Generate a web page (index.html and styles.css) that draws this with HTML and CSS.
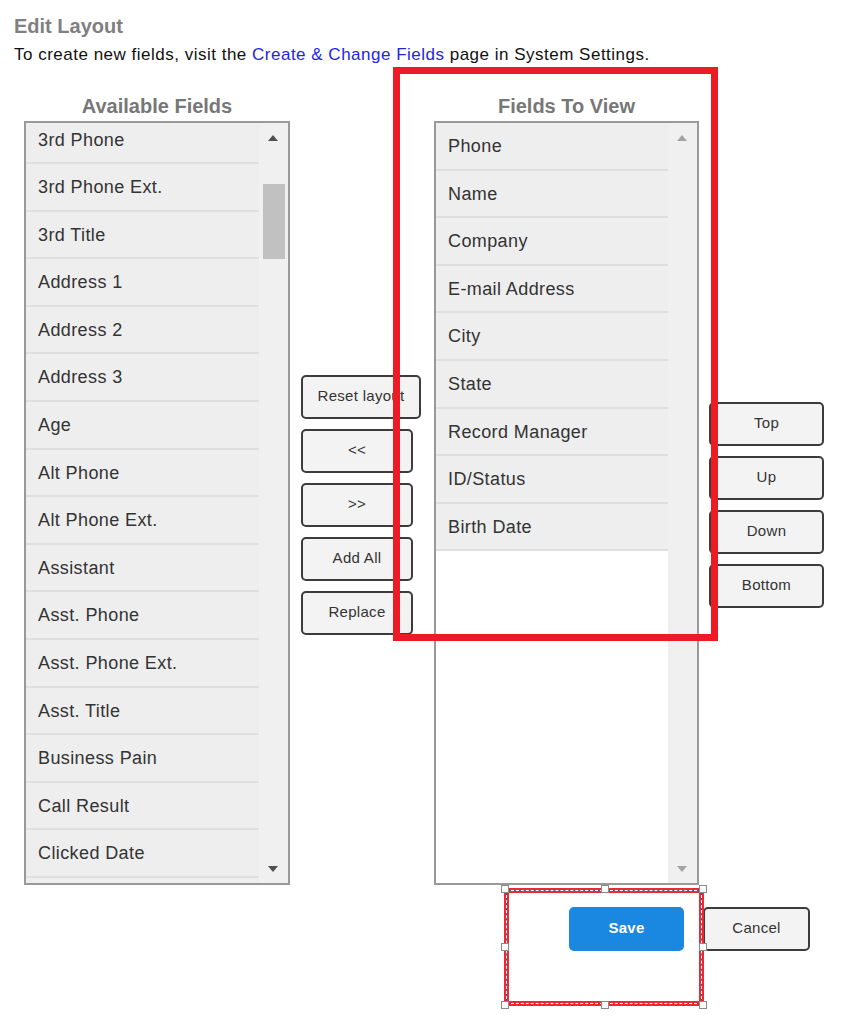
FILE: index.html
```html
<!DOCTYPE html>
<html>
<head>
<meta charset="utf-8">
<link rel="stylesheet" href="styles.css">
</head>
<body>
<div class="page">
  <div class="header">
    <h1 class="title">Edit Layout</h1>
    <p class="subtitle">To create new fields, visit the <a class="link">Create &amp; Change Fields</a> page in System Settings.</p>
  </div>

  <div class="main">
    <div class="col col-avail">
      <div class="col-title">Available Fields</div>
      <div class="listbox">
        <div class="items items-scrolled">
          <div class="item">3rd Phone</div>
          <div class="item">3rd Phone Ext.</div>
          <div class="item">3rd Title</div>
          <div class="item">Address 1</div>
          <div class="item">Address 2</div>
          <div class="item">Address 3</div>
          <div class="item">Age</div>
          <div class="item">Alt Phone</div>
          <div class="item">Alt Phone Ext.</div>
          <div class="item">Assistant</div>
          <div class="item">Asst. Phone</div>
          <div class="item">Asst. Phone Ext.</div>
          <div class="item">Asst. Title</div>
          <div class="item">Business Pain</div>
          <div class="item">Call Result</div>
          <div class="item">Clicked Date</div>
          <div class="item"></div>
        </div>
        <div class="track">
          <svg class="arrow arrow-up" width="10" height="6" viewBox="0 0 10 6"><polygon points="0,6 10,6 5,0" fill="#505050"/></svg>
          <div class="thumb"></div>
          <svg class="arrow arrow-down" width="10" height="6" viewBox="0 0 10 6"><polygon points="0,0 10,0 5,6" fill="#505050"/></svg>
        </div>
      </div>
    </div>

    <div class="col col-mid">
      <button class="btn btn-wide">Reset layout</button>
      <button class="btn">&lt;&lt;</button>
      <button class="btn">&gt;&gt;</button>
      <button class="btn">Add All</button>
      <button class="btn">Replace</button>
    </div>

    <div class="col col-view">
      <div class="col-title">Fields To View</div>
      <div class="listbox">
        <div class="items">
          <div class="item">Phone</div>
          <div class="item">Name</div>
          <div class="item">Company</div>
          <div class="item">E-mail Address</div>
          <div class="item">City</div>
          <div class="item">State</div>
          <div class="item">Record Manager</div>
          <div class="item">ID/Status</div>
          <div class="item">Birth Date</div>
        </div>
        <div class="track">
          <svg class="arrow arrow-up" width="10" height="6" viewBox="0 0 10 6"><polygon points="0,6 10,6 5,0" fill="#a3a3a3"/></svg>
          <svg class="arrow arrow-down" width="10" height="6" viewBox="0 0 10 6"><polygon points="0,0 10,0 5,6" fill="#a3a3a3"/></svg>
        </div>
      </div>
    </div>

    <div class="col col-order">
      <button class="btn btn-order">Top</button>
      <button class="btn btn-order">Up</button>
      <button class="btn btn-order">Down</button>
      <button class="btn btn-order">Bottom</button>
    </div>
  </div>

  <div class="footer">
    <button class="btn-save">Save</button>
    <button class="btn btn-cancel">Cancel</button>
  </div>

  <div class="highlight"></div>

  <div class="selection">
    <span class="handle h-tl"></span>
    <span class="handle h-tm"></span>
    <span class="handle h-tr"></span>
    <span class="handle h-ml"></span>
    <span class="handle h-mr"></span>
    <span class="handle h-bl"></span>
    <span class="handle h-bm"></span>
    <span class="handle h-br"></span>
  </div>
</div>
</body>
</html>
```

FILE: styles.css
```css
* { box-sizing: border-box; }
html, body { margin: 0; padding: 0; background: #fff; }
body { font-family: "Liberation Sans", Arial, sans-serif; color: #333; }

.page { position: relative; width: 843px; height: 1024px; overflow: hidden; }

.header { padding: 14px 0 0 14px; }
.title { margin: 0; font-size: 20px; line-height: 24px; font-weight: bold; color: #808080; }
.subtitle { margin: 7px 0 0 0; font-size: 17px; line-height: 20px; letter-spacing: 0.5px; color: #111; white-space: nowrap; }
.link { color: #2424e8; text-decoration: none; }

.main { display: flex; align-items: flex-start; padding-left: 24px; margin-top: 29px; }
.col { display: flex; flex-direction: column; }
.col-avail { width: 266px; }
.col-mid { width: 120px; margin-left: 11px; padding-top: 281px; gap: 10px; align-items: flex-start; }
.col-view { width: 265px; margin-left: 13px; }
.col-order { width: 115px; margin-left: 10px; padding-top: 308px; gap: 10px; }

.col-title { text-align: center; font-size: 20px; line-height: 24px; font-weight: bold; color: #777; margin-bottom: 3px; }

.listbox { display: flex; height: 764px; border: 2px solid #999; overflow: hidden; background: #fff; }
.items { flex: 1; display: flex; flex-direction: column; }
.items-scrolled { margin-top: -6.5px; }
.item { flex: none; height: 47.6px; border-bottom: 2px solid #dfdfdf; background: #eeeeee; padding: 1px 0 0 12px; font-size: 18px; line-height: 45px; letter-spacing: 0.4px; color: #333; white-space: nowrap; }

.track { position: relative; width: 29px; flex: none; background: #f0f0f0; }
.arrow { position: absolute; left: 9px; }
.arrow-up { top: 12px; }
.arrow-down { bottom: 11px; }
.thumb { position: absolute; left: 4px; top: 61px; width: 22px; height: 75px; background: #c1c1c1; }

.btn { height: 44px; width: 112px; border: 2px solid #3c3c3c; border-radius: 5px; background: #f3f3f3; font-family: "Liberation Sans", Arial, sans-serif; font-size: 15px; letter-spacing: 0.3px; color: #333; padding: 0 0 4px 0; }
.btn-wide { width: 120px; }
.btn-order { width: 115px; }

.footer { display: flex; gap: 19px; padding-left: 569px; margin-top: 22px; }
.btn-save { width: 115px; height: 44px; border: none; border-radius: 5px; background: #1a87e0; color: #fff; font-family: "Liberation Sans", Arial, sans-serif; font-size: 15px; font-weight: bold; letter-spacing: 0.3px; padding: 0 0 4px 0; }
.btn-cancel { width: 107px; }

.highlight { position: absolute; left: 393px; top: 67px; width: 325px; height: 574px; border: 7px solid #ed1c24; pointer-events: none; }

.selection { position: absolute; left: 504px; top: 888px; width: 200px; height: 118px; border: 2px solid #ee2a2f; }
.selection::before { content: ""; position: absolute; inset: 0; border: 1px solid #3a52b8; }
.selection::after { content: ""; position: absolute; inset: 0; border: 1px dashed #fff; box-shadow: inset 0 0 0 2px #ee2a2f; }
.handle { position: absolute; width: 8px; height: 8px; background: #fff; border: 1px solid #8a8a8a; z-index: 2; }
.h-tl { left: -5px; top: -5px; }
.h-tm { left: 95px; top: -5px; }
.h-tr { right: -5px; top: -5px; }
.h-ml { left: -5px; top: 53px; }
.h-mr { right: -5px; top: 53px; }
.h-bl { left: -5px; bottom: -5px; }
.h-bm { left: 95px; bottom: -5px; }
.h-br { right: -5px; bottom: -5px; }
```
